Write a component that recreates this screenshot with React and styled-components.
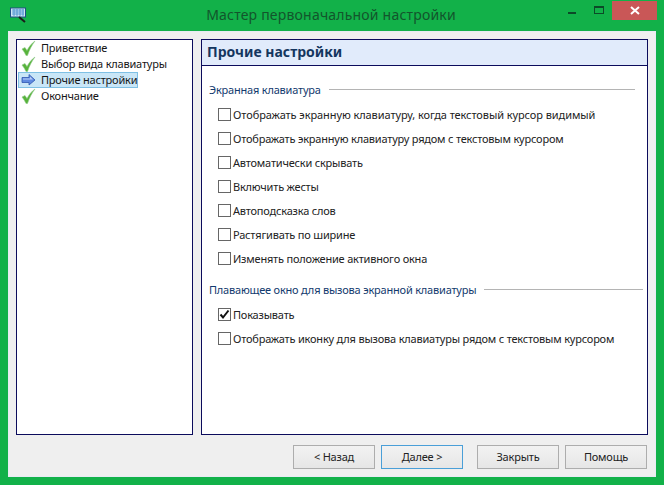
import React from "react";
import styled, { createGlobalStyle } from "styled-components";

const Global = createGlobalStyle`
  html, body { margin: 0; padding: 0; background: #12b149; }
  #root { width: 664px; height: 485px; }
`;

const Win = styled.div`
  width: 664px; height: 485px; box-sizing: border-box;
  background: #12b149;
  display: flex; flex-direction: column;
  font-family: "Noto Sans", "Liberation Sans", sans-serif;
  letter-spacing: -0.2px;
`;
const TitleBar = styled.div`
  height: 31px; flex: none; display: flex; align-items: flex-start; position: relative;
`;
const AppIcon = styled.svg`
  width: 17px; height: 16px; margin: 7px 0 0 10px; flex: none;
`;
const Title = styled.div`
  position: absolute; left: 0; right: 0; top: 5px; text-align: center;
  font-size: 14px; line-height: 20px; color: #12552c; letter-spacing: 0.2px;
  padding-right: 2px;
`;
const Controls = styled.div`
  margin-left: auto; display: flex; align-items: flex-start; margin-right: 7px; margin-top: 1px;
`;
const Ctl = styled.div`
  width: ${p => p.$w}px; height: 19px; display: flex; align-items: center; justify-content: center;
  background: ${p => p.$bg || "transparent"};
`;
const Body = styled.div`
  flex: 1; margin: 0 8px 8px 8px; background: #efefef; border: 1px solid #e8ebf4;
  box-sizing: border-box; padding: 7px 7px 7px 7px; display: flex; flex-direction: column;
`;
const Panels = styled.div`
  display: flex; gap: 8px; height: 396px; flex: none;
`;
const Steps = styled.div`
  width: 177px; box-sizing: border-box; background: #fff; border: 1px solid #0c0c5c;
  padding: 0 0 0 1px; flex: none;
`;
const StepRow = styled.div`
  height: 16px; width: 120px; box-sizing: border-box; display: flex; align-items: center;
  font-size: 11px; color: #161616; white-space: nowrap; position: relative;
  ${p => p.$active && "background: #c9e6f7; outline: 1px solid #7fc0e4; outline-offset: -1px;"}
`;
const StepLabel = styled.span`
  line-height: 15px; margin-top: -1px;
`;
const StepIcon = styled.svg`
  width: 16px; height: 16px; margin: 0 5px 0 2px; flex: none;
`;
const Main = styled.div`
  flex: 1; box-sizing: border-box; background: #fff; border: 1px solid #0c0c5c;
  display: flex; flex-direction: column;
`;
const Header = styled.div`
  height: 26px; box-sizing: border-box; flex: none; background: #e1ebfb; border-bottom: 1px solid #0c0c5c;
  padding-left: 5px; font-size: 14px; font-weight: 700; color: #14365f; line-height: 23px; letter-spacing: 0;
`;
const Group = styled.div`
  display: flex; align-items: center; height: 16px; padding-left: 7px;
  margin-right: ${p => p.$mr}px; margin-top: ${p => p.$mt}px;
  font-size: 11px; color: #123a6e; white-space: nowrap;
`;
const Rule = styled.div`
  flex: 1; height: 1px; background: #b4b4b4; margin-left: 8px; margin-top: 1px;
`;
const Gap = styled.div`
  height: 5px; flex: none;
`;
const Row = styled.div`
  display: flex; align-items: center; height: 24px; padding-left: 16px;
  font-size: 11px; color: #222; white-space: nowrap;
  margin-top: ${p => p.$mt || 0}px;
  letter-spacing: ${p => p.$ls ?? -0.2}px;
`;
const Box = styled.div`
  width: 13px; height: 13px; box-sizing: border-box; border: 1px solid #666; background: #fff;
  margin-right: 2px; flex: none; display: flex; align-items: center; justify-content: center;
`;
const Footer = styled.div`
  display: flex; justify-content: flex-end; margin-top: 10px; padding-right: 1px;
`;
const Btn = styled.div`
  width: 82px; height: 24px; box-sizing: border-box; display: flex; align-items: center; justify-content: center;
  font-size: 11px; color: #222; background: linear-gradient(#f2f2f2, #e6e6e6); padding-bottom: 2px;
  border: 1px solid ${p => p.$primary ? "#4a9fd8" : "#adadad"};
  margin-left: ${p => p.$ml}px;
`;

const Check = () => (
  <StepIcon viewBox="0 0 16 16">
    <path d="M2 9 L5 7.5 L7 10.5 C9 6.5 11.5 3.5 15 1 C12 5 9.5 9.5 7.5 15.5 L6 15.5 C5 13 3.5 11 2 9 Z" fill="#57b33a" stroke="#8fc98a" strokeWidth="0.6" />
  </StepIcon>
);
const Arrow = () => (
  <StepIcon viewBox="0 0 16 16">
    <path d="M2 5.5 H9 V2.5 L15 8 L9 13 V10.5 H2 Z" fill="#5f8ae0" stroke="#2e55b0" strokeWidth="0.8" />
    <path d="M3 6.5 H10 V4.5 L13 7.5 H3 Z" fill="#b9cdf5" />
  </StepIcon>
);

const first = [
  ["Отображать экранную клавиатуру, когда текстовый курсор видимый", -0.08],
  ["Отображать экранную клавиатуру рядом с текстовым курсором"],
  ["Автоматически скрывать"],
  ["Включить жесты"],
  ["Автоподсказка слов"],
  ["Растягивать по ширине"],
  ["Изменять положение активного окна"],
];

export default function App() {
  return (
    <Win>
      <Global />
      <TitleBar>
        <AppIcon viewBox="0 0 17 16">
          <rect x="0.5" y="1" width="15" height="9" fill="#cfe6f5" stroke="#1f4f86" />
          <path d="M2 3h12M2 5h12M2 7h12M4 2v7M7 2v7M10 2v7M13 2v7" stroke="#3f8ccc" strokeWidth="0.8" />
          <path d="M9 10l6 5" stroke="#1b1b1b" strokeWidth="2" />
        </AppIcon>
        <Title>Мастер первоначальной настройки</Title>
        <Controls>
          <Ctl $w={27}>
            <svg width="9" height="3" viewBox="0 0 9 3" style={{ marginTop: 6 }}><rect width="8" height="2" fill="#0c4a28" /></svg>
          </Ctl>
          <Ctl $w={26}>
            <svg width="10" height="8" viewBox="0 0 10 8" style={{ marginTop: -2 }}><rect x="0.5" y="0.5" width="9" height="7" fill="none" stroke="#0c4a28" /><rect x="0" y="0" width="10" height="2" fill="#0c4a28" /></svg>
          </Ctl>
          <Ctl $w={45} $bg="#c95757">
            <svg width="10" height="9" viewBox="0 0 10 9"><path d="M1 1l8 7M9 1l-8 7" stroke="#fff" strokeWidth="2" /></svg>
          </Ctl>
        </Controls>
      </TitleBar>
      <Body>
        <Panels>
          <Steps>
            <StepRow><Check /><StepLabel>Приветствие</StepLabel></StepRow>
            <StepRow><Check /><StepLabel>Выбор вида клавиатуры</StepLabel></StepRow>
            <StepRow $active><Arrow /><StepLabel>Прочие настройки</StepLabel></StepRow>
            <StepRow><Check /><StepLabel>Окончание</StepLabel></StepRow>
          </Steps>
          <Main>
            <Header>Прочие настройки</Header>
            <Group $mt={15} $mr={12}>Экранная клавиатура<Rule /></Group>
            <Gap />
            {first.map(([t, ls]) => <Row key={t} $ls={ls}><Box />{t}</Row>)}
            <Group $mt={11} $mr={4}>Плавающее окно для вызова экранной клавиатуры<Rule /></Group>
            <Row $mt={5}>
              <Box><svg width="11" height="11" viewBox="0 0 11 11"><path d="M1.5 5.5L4 8.5L9.5 1.5" fill="none" stroke="#111" strokeWidth="2" /></svg></Box>
              Показывать
            </Row>
            <Row><Box />Отображать иконку для вызова клавиатуры рядом с текстовым курсором</Row>
          </Main>
        </Panels>
        <Footer>
          <Btn>&lt; Назад</Btn>
          <Btn $primary $ml={6}>Далее &gt;</Btn>
          <Btn $ml={14}>Закрыть</Btn>
          <Btn $ml={6}>Помощь</Btn>
        </Footer>
      </Body>
    </Win>
  );
}
